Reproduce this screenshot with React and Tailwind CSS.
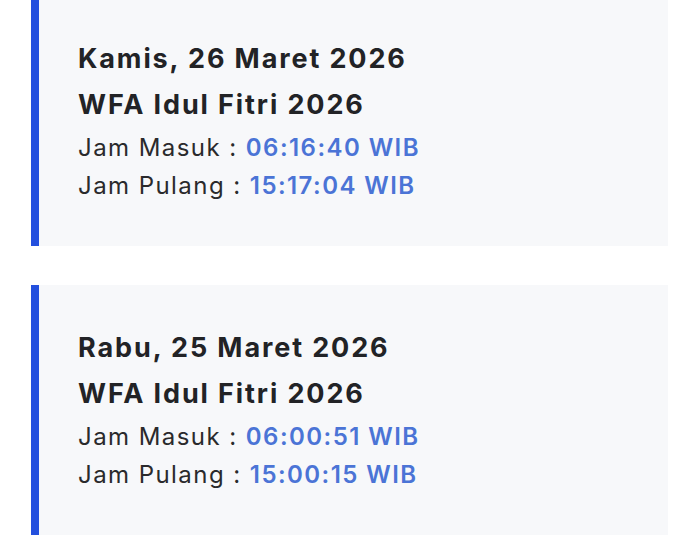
const records = [
  { date: 'Kamis, 26 Maret 2026', note: 'WFA Idul Fitri 2026', masuk: '06:16:40 WIB', pulang: '15:17:04 WIB' },
  { date: 'Rabu, 25 Maret 2026', note: 'WFA Idul Fitri 2026', masuk: '06:00:51 WIB', pulang: '15:00:15 WIB' },
];

const AttendanceCard = ({ item }) => (
  <div className="border-l-[8px] border-[#2450de] bg-[#f7f8fa] pl-[39px] pt-[40px] pb-[41px]">
    <div className="text-[27px] font-bold leading-[46px] tracking-[0.07em] text-[#222326]">
      <p>{item.date}</p>
      <p>{item.note}</p>
    </div>
    <div className="mt-[1px] text-[24px] leading-[38px] tracking-[0.06em] text-[#2a2a2c]">
      <p>
        Jam Masuk : <span className="font-semibold text-[#4b74d6]">{item.masuk}</span>
      </p>
      <p>
        Jam Pulang : <span className="font-semibold text-[#4b74d6]">{item.pulang}</span>
      </p>
    </div>
  </div>
);

export default function App() {
  return (
    <div className="h-[539px] w-[700px] overflow-hidden bg-white font-['Inter',sans-serif]">
      <div className="-mt-[4px] ml-[31px] mr-[32px] flex flex-col gap-[39px]">
        {records.map((item) => (
          <AttendanceCard key={item.date} item={item} />
        ))}
      </div>
    </div>
  );
}
